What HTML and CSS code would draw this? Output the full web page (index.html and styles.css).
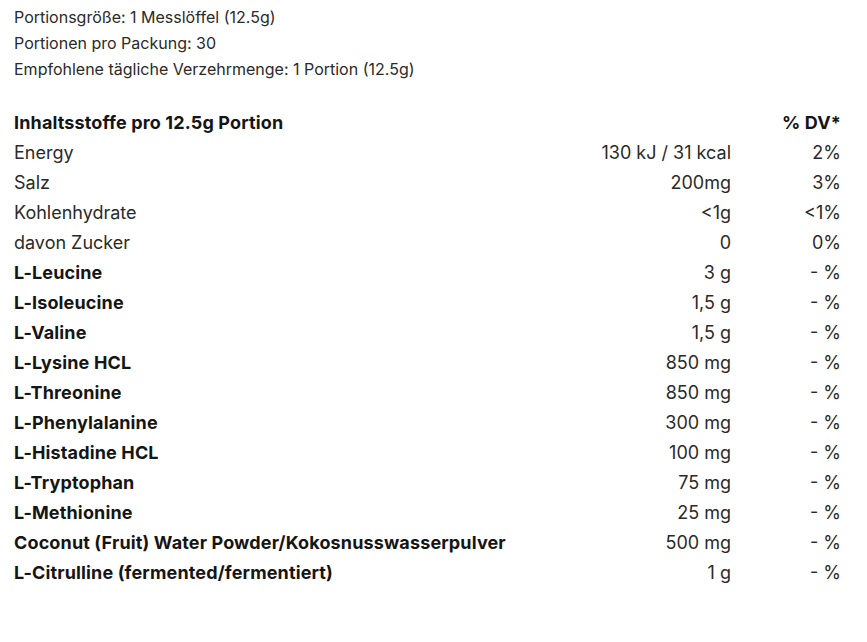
FILE: index.html
```html
<!DOCTYPE html>
<html lang="de">
<head>
<meta charset="utf-8">
<link rel="stylesheet" href="styles.css">
</head>
<body>
<div class="page">
  <div class="meta">
    <div class="meta-line">Portionsgröße: 1 Messlöffel (12.5g)</div>
    <div class="meta-line">Portionen pro Packung: 30</div>
    <div class="meta-line">Empfohlene tägliche Verzehrmenge: 1 Portion (12.5g)</div>
  </div>
  <div class="facts">
    <div class="cell name head">Inhaltsstoffe pro 12.5g Portion</div>
    <div class="cell amount head"></div>
    <div class="cell dv head">% DV*</div>

    <div class="cell name">Energy</div><div class="cell amount">130 kJ / 31 kcal</div><div class="cell dv">2%</div>
    <div class="cell name">Salz</div><div class="cell amount">200mg</div><div class="cell dv">3%</div>
    <div class="cell name">Kohlenhydrate</div><div class="cell amount">&lt;1g</div><div class="cell dv">&lt;1%</div>
    <div class="cell name">davon Zucker</div><div class="cell amount">0</div><div class="cell dv">0%</div>
    <div class="cell name strong">L-Leucine</div><div class="cell amount">3 g</div><div class="cell dv">- %</div>
    <div class="cell name strong">L-Isoleucine</div><div class="cell amount">1,5 g</div><div class="cell dv">- %</div>
    <div class="cell name strong">L-Valine</div><div class="cell amount">1,5 g</div><div class="cell dv">- %</div>
    <div class="cell name strong">L-Lysine HCL</div><div class="cell amount">850 mg</div><div class="cell dv">- %</div>
    <div class="cell name strong">L-Threonine</div><div class="cell amount">850 mg</div><div class="cell dv">- %</div>
    <div class="cell name strong">L-Phenylalanine</div><div class="cell amount">300 mg</div><div class="cell dv">- %</div>
    <div class="cell name strong">L-Histadine HCL</div><div class="cell amount">100 mg</div><div class="cell dv">- %</div>
    <div class="cell name strong">L-Tryptophan</div><div class="cell amount">75 mg</div><div class="cell dv">- %</div>
    <div class="cell name strong">L-Methionine</div><div class="cell amount">25 mg</div><div class="cell dv">- %</div>
    <div class="cell name strong">Coconut (Fruit) Water Powder/Kokosnusswasserpulver</div><div class="cell amount">500 mg</div><div class="cell dv">- %</div>
    <div class="cell name strong">L-Citrulline (fermented/fermentiert)</div><div class="cell amount">1 g</div><div class="cell dv">- %</div>
  </div>
</div>
</body>
</html>
```
FILE: styles.css
```css
html, body {
  margin: 0;
  padding: 0;
  background: #fff;
}
body {
  font-family: Inter, "Open Sans", "Liberation Sans", sans-serif;
  color: #1c1c1c;
}
.page {
  width: 827px;
  padding: 4px 0 0 14px;
}
.meta {
  font-size: 16px;
  line-height: 26px;
  color: #2a2a2a;
}
.facts {
  margin-top: 26px;
  display: grid;
  grid-template-columns: 1fr 200px 110px;
  font-size: 18px;
  line-height: 30px;
}
.cell {
  white-space: nowrap;
  color: #2a2a2a;
}
.amount, .dv {
  text-align: right;
}
.head, .strong {
  font-weight: 700;
  letter-spacing: 0.14px;
  color: #151515;
}
```
